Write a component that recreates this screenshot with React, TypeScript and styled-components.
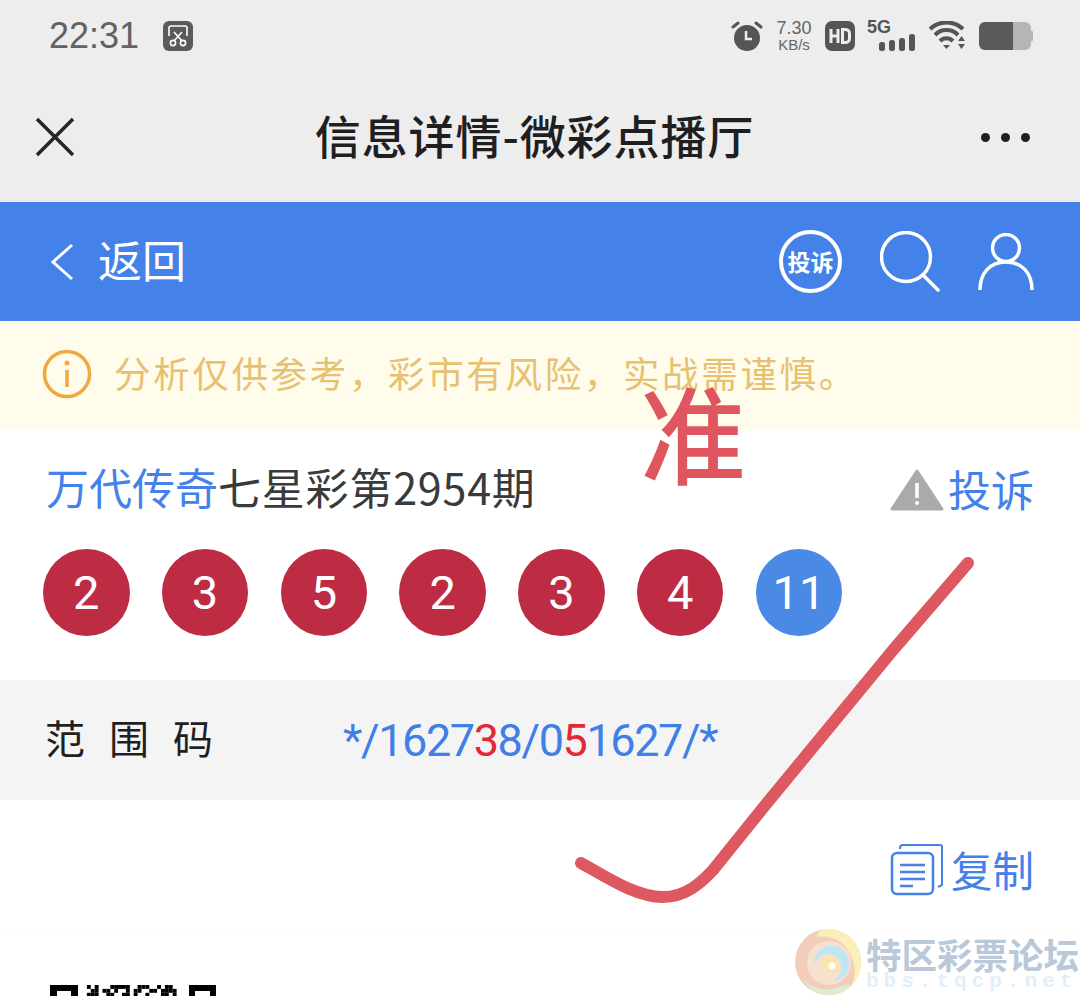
import styled, { createGlobalStyle } from 'styled-components';

const CJK = `"Noto Sans CJK SC", "Liberation Sans", sans-serif`;
const LATIN = `"Liberation Sans", "Noto Sans CJK SC", sans-serif`;
const DIGITS = `Roboto, "Liberation Sans", sans-serif`;

const GlobalStyle = createGlobalStyle`
	html, body {
		margin: 0;
		padding: 0;
		background: #fff;
		overflow: hidden;
	}
`;

const Page = styled.div`
	position: relative;
	width: 1080px;
	height: 996px;
	overflow: hidden;
	font-family: ${CJK};
`;

const StatusBar = styled.div`
	height: 75px;
	background: #ededed;
	display: flex;
	align-items: center;
	justify-content: space-between;
	padding: 0 47px 3px 49px;
	box-sizing: border-box;
`;

const StatusLeft = styled.div`
	display: flex;
	align-items: center;
	gap: 24px;
`;

const Clock = styled.span`
	font-family: ${LATIN};
	font-size: 36px;
	line-height: 1;
	color: #626262;
`;

const StatusRight = styled.div`
	display: flex;
	align-items: center;
	gap: 12px;
`;

const Speed = styled.div`
	display: flex;
	flex-direction: column;
	align-items: center;
	font-family: ${LATIN};
	color: #666;
	width: 38px;

	b {
		font-weight: 400;
		font-size: 18px;
		line-height: 17px;
	}
	span {
		font-size: 15px;
		line-height: 15px;
	}
`;

const Network = styled.div`
	width: 50px;
	height: 32px;
	display: flex;
	flex-direction: column;
	margin-top: -2px;

	span {
		font-family: ${LATIN};
		font-weight: 700;
		font-size: 18px;
		line-height: 16px;
		color: #555;
	}
	svg {
		align-self: flex-end;
		margin-top: -2px;
	}
`;

const NavBar = styled.div`
	height: 127px;
	background: #ededed;
	display: flex;
	align-items: center;
	justify-content: space-between;
	padding: 0 50px 4px 35px;
	box-sizing: border-box;
`;

const NavTitle = styled.div`
	font-size: 46px;
	font-weight: 500;
	color: #1f1f1f;
	letter-spacing: 0.9px;
	line-height: 1;
	margin: -5px 0 0 13px;
`;

const MoreDots = styled.div`
	display: flex;
	gap: 11px;
	margin-top: 2px;

	i {
		width: 9px;
		height: 9px;
		border-radius: 50%;
		background: #1f1f1f;
	}
`;

const BlueBar = styled.div`
	height: 119px;
	background: #4481e8;
	display: flex;
	align-items: center;
	justify-content: space-between;
	padding: 0 46px 0 50px;
	box-sizing: border-box;
`;

const BackLink = styled.div`
	display: flex;
	align-items: center;
	gap: 24px;
	color: #fff;
	font-size: 44px;
	line-height: 1;

	span {
		margin-top: -6px;
	}
`;

const BarIcons = styled.div`
	display: flex;
	align-items: center;
	gap: 38px;
`;

const ComplainBadge = styled.div`
	width: 63px;
	height: 63px;
	border-radius: 50%;
	border: 4px solid #fff;
	box-sizing: border-box;
	display: flex;
	align-items: center;
	justify-content: center;
	color: #fff;
	font-size: 23px;
	font-weight: 700;
	line-height: 1;
	white-space: nowrap;
`;

const Notice = styled.div`
	height: 109px;
	background: #fffcec;
	display: flex;
	align-items: center;
	gap: 22px;
	padding: 0 0 4px 42px;
	box-sizing: border-box;
`;

const NoticeText = styled.span`
	font-size: 36.5px;
	letter-spacing: 2.65px;
	color: #e7c172;
	line-height: 1;
	white-space: nowrap;
`;

const ResultCard = styled.div`
	height: 250px;
	background: #fff;
	padding: 0 46px 0 43px;
	box-sizing: border-box;
`;

const TitleRow = styled.div`
	height: 119px;
	display: flex;
	align-items: center;
	justify-content: space-between;
`;

const IssueTitle = styled.div`
	font-size: 43px;
	color: #3a3a3a;
	line-height: 1;
	padding-left: 3px;
	margin-top: -6px;
	letter-spacing: 0.8px;

	em {
		font-style: normal;
		color: #4481e8;
		letter-spacing: 0;
	}
`;

const ComplainLink = styled.div`
	display: flex;
	align-items: center;
	gap: 4px;
	font-size: 43px;
	line-height: 1;
	color: #4481e8;

	span {
		margin-top: -3px;
	}
`;

const BallRow = styled.div`
	display: flex;
	gap: 32.3px;
`;

const Ball = styled.div<{ $blue?: boolean }>`
	width: 86.5px;
	height: 87px;
	border-radius: 50%;
	background: ${(p) => (p.$blue ? '#4a8ae4' : '#bd2c42')};
	color: #fff;
	display: flex;
	align-items: center;
	justify-content: center;
	font-family: ${DIGITS};
	font-weight: 400;
	font-size: 47px;
	line-height: 1;
`;

const RangeRow = styled.div`
	height: 120px;
	background: #f4f4f5;
	display: flex;
	align-items: center;
	padding-left: 45px;
`;

const RangeLabel = styled.div`
	width: 298px;
	font-size: 40px;
	letter-spacing: 24px;
	color: #1f1f1f;
	line-height: 1;
	white-space: nowrap;
	margin-top: -6px;
`;

const RangeValue = styled.div`
	font-family: ${DIGITS};
	font-weight: 400;
	font-size: 45px;
	letter-spacing: -1.4px;
	color: #3f7fe6;
	line-height: 1;

	em {
		font-style: normal;
		color: #e02a36;
	}
`;

const CopyRow = styled.div`
	height: 135px;
	background: #fff;
	display: flex;
	justify-content: flex-end;
	align-items: flex-start;
	padding: 44px 46px 0 0;
	box-sizing: border-box;
	border-bottom: 4px solid #fdfdfd;
`;

const CopyLink = styled.div`
	display: flex;
	align-items: center;
	gap: 8px;
	font-size: 41.5px;
	line-height: 1;
	color: #4481e8;
`;

const QrStrip = styled.div`
	height: 61px;
	background: #fff;
	padding: 50px 0 0 50px;
	box-sizing: border-box;

	svg {
		display: block;
	}
`;

const Mark = styled.div`
	position: absolute;
	left: 640px;
	top: 367px;
	font-size: 106px;
	line-height: 1.2;
	color: #df5560;
	font-weight: 500;
`;

const CheckStroke = styled.svg`
	position: absolute;
	left: 560px;
	top: 540px;
`;

const Watermark = styled.div`
	position: absolute;
	left: 794px;
	top: 928px;
	display: flex;
	gap: 6px;
`;

const WatermarkLogo = styled.svg`
	opacity: 0.7;
	flex: none;
`;

const WatermarkText = styled.div`
	display: flex;
	flex-direction: column;
	margin-top: 7px;
	margin-left: -2px;

	b {
		font-size: 35.5px;
		line-height: 38px;
		font-weight: 700;
		color: #b9c9da;
		white-space: nowrap;
	}
	span {
		font-family: "Liberation Mono", monospace;
		font-size: 21px;
		line-height: 17px;
		font-weight: 700;
		letter-spacing: 5px;
		color: #e4eef8;
		white-space: nowrap;
	}
`;

// what shows of the code's top rows, between its two corner squares
const qrRows = [
	'0101000111110011100101100',
	'0011011010010110011011110',
	'0111001100110100100011010',
];

function QrTop() {
	return (
		<svg width="166" height="11" viewBox="0 0 166 11">
			<path d="M0 0h28v11h-7V6H7v5H0z" fill="#000" />
			<path d="M139 0h27v11h-6V6h-15v5h-6z" fill="#000" />
			{qrRows.map((row, y) =>
				row.split('').map((c, x) =>
					c === '1' ? (
						<rect key={`${x}-${y}`} x={33 + x * 3.9} y={y * 3.9} width="3.9" height="3.9" fill="#000" />
					) : null,
				),
			)}
		</svg>
	);
}

function App() {
	return (
		<Page>
			<GlobalStyle />
			<StatusBar>
				<StatusLeft>
					<Clock>22:31</Clock>
					<svg width="30" height="30" viewBox="0 0 30 30">
						<rect width="30" height="30" rx="6" fill="#5a5a5a" />
						<path d="M6 15V7a2 2 0 0 1 2-2h14a2 2 0 0 1 2 2v8" fill="none" stroke="#fff" strokeWidth="1.600" />
						<path d="M11 11l8 9M19 11l-8 9" stroke="#fff" strokeWidth="1.600" />
						<circle cx="10" cy="22" r="2.600" fill="none" stroke="#fff" strokeWidth="1.600" />
						<circle cx="20" cy="22" r="2.600" fill="none" stroke="#fff" strokeWidth="1.600" />
					</svg>
				</StatusLeft>
				<StatusRight>
					<svg width="32" height="30" viewBox="0 0 32 30">
						<circle cx="16" cy="17" r="13" fill="#555" />
						<path d="M15 10v8h6" fill="none" stroke="#eee" strokeWidth="2.500" />
						<path d="M2 6l5-4M30 6l-5-4" stroke="#555" strokeWidth="3" strokeLinecap="round" />
					</svg>
					<Speed>
						<b>7.30</b>
						<span>KB/s</span>
					</Speed>
					<svg width="30" height="30" viewBox="0 0 30 30">
						<rect width="30" height="30" rx="7" fill="#555" />
						<path d="M6 8v14M13 8v14M6 15h7" stroke="#eee" strokeWidth="3" />
						<path d="M17.500 8.500h3a4 4 0 0 1 4 4v5a4 4 0 0 1-4 4h-3z" fill="none" stroke="#eee" strokeWidth="3" />
					</svg>
					<Network>
						<span>5G</span>
						<svg width="38" height="18" viewBox="0 0 38 18">
							<rect x="0" y="9" width="6" height="9" rx="2.500" fill="#555" />
							<rect x="10" y="7" width="6" height="11" rx="2.500" fill="#555" />
							<rect x="20" y="5" width="6" height="13" rx="2.500" fill="#555" />
							<rect x="30" y="1" width="6" height="17" rx="2.500" fill="#555" />
						</svg>
					</Network>
					<svg width="38" height="30" viewBox="0 0 38 30">
						<path d="M1 8a24 24 0 0 1 33 0" fill="none" stroke="#555" strokeWidth="4" />
						<path d="M6 14a16 16 0 0 1 23 0" fill="none" stroke="#555" strokeWidth="4" />
						<path d="M11 20a9 9 0 0 1 13 0" fill="none" stroke="#555" strokeWidth="4" />
						<path d="M14 24h7l-3.500 4z" fill="#555" />
						<path d="M29 20h7l-3.500-5zM29 23h7l-3.500 5z" fill="#555" />
					</svg>
					<svg width="54" height="28" viewBox="0 0 54 28">
						<rect width="52" height="28" rx="6" fill="#b5b5b5" />
						<path d="M6 0h28v28H6a6 6 0 0 1-6-6V6a6 6 0 0 1 6-6z" fill="#5a5a5a" />
						<rect x="51" y="9" width="3" height="10" rx="1" fill="#b5b5b5" />
					</svg>
				</StatusRight>
			</StatusBar>

			<NavBar>
				<svg width="40" height="40" viewBox="0 0 40 40">
					<path d="M2 2l36 36M38 2L2 38" stroke="#262626" strokeWidth="3.500" />
				</svg>
				<NavTitle>信息详情-微彩点播厅</NavTitle>
				<MoreDots>
					<i />
					<i />
					<i />
				</MoreDots>
			</NavBar>

			<BlueBar>
				<BackLink>
					<svg width="24" height="38" viewBox="0 0 24 38">
						<path d="M22 2L3 19l19 17" fill="none" stroke="#fff" strokeWidth="3" />
					</svg>
					<span>返回</span>
				</BackLink>
				<BarIcons>
					<ComplainBadge>投诉</ComplainBadge>
					<svg width="60" height="62" viewBox="0 0 60 62">
						<circle cx="26" cy="26" r="24.500" fill="none" stroke="#fff" strokeWidth="3.500" />
						<path d="M43 44l15 15" stroke="#fff" strokeWidth="3.500" strokeLinecap="round" />
					</svg>
					<svg width="56" height="58" viewBox="0 0 56 58">
						<circle cx="28" cy="15" r="13.500" fill="none" stroke="#fff" strokeWidth="3.500" />
						<path d="M2 57c0-17 10-28 26-28s26 11 26 28" fill="none" stroke="#fff" strokeWidth="3.500" />
					</svg>
				</BarIcons>
			</BlueBar>

			<Notice>
				<svg width="50" height="50" viewBox="0 0 50 50">
					<circle cx="25" cy="25" r="22.500" fill="none" stroke="#f0a840" strokeWidth="3.500" />
					<circle cx="25" cy="14" r="2.500" fill="#f0a840" />
					<path d="M25 21v17" stroke="#f0a840" strokeWidth="3.500" />
				</svg>
				<NoticeText>分析仅供参考，彩市有风险，实战需谨慎。</NoticeText>
			</Notice>

			<ResultCard>
				<TitleRow>
					<IssueTitle>
						<em>万代传奇</em>七星彩第2954期
					</IssueTitle>
					<ComplainLink>
						<svg width="54" height="44" viewBox="0 0 54 44">
							<path d="M27 3L52 41H2z" fill="#aaa" stroke="#aaa" strokeWidth="3" strokeLinejoin="round" />
							<path d="M27 15v15" stroke="#fff" strokeWidth="3.500" />
							<circle cx="27" cy="35" r="2" fill="#fff" />
						</svg>
						<span>投诉</span>
					</ComplainLink>
				</TitleRow>
				<BallRow>
					{['2', '3', '5', '2', '3', '4'].map((n, i) => (
						<Ball key={i}>{n}</Ball>
					))}
					<Ball $blue>11</Ball>
				</BallRow>
			</ResultCard>

			<RangeRow>
				<RangeLabel>范围码</RangeLabel>
				<RangeValue>
					*/1627<em>3</em>8/0<em>5</em>1627/*
				</RangeValue>
			</RangeRow>

			<CopyRow>
				<CopyLink>
					<svg width="53" height="52" viewBox="0 0 53 52">
						<path d="M10 5V4a3 3 0 0 1 3-3h37a2 2 0 0 1 2 2v38l-4 2" fill="none" stroke="#4481e8" strokeWidth="2" />
						<rect x="2" y="9" width="41" height="41" rx="5" fill="#fff" stroke="#4481e8" strokeWidth="2.500" />
						<path d="M10 21h25M10 28h25M10 35h25M10 42h13" stroke="#4481e8" strokeWidth="2.500" />
					</svg>
					<span>复制</span>
				</CopyLink>
			</CopyRow>

			<QrStrip>
				<QrTop />
			</QrStrip>

			<Mark>准</Mark>

			<CheckStroke width="430" height="380" viewBox="0 0 430 380">
				<path
					d="M21 323C45 336 75 357 103 357C125 357 140 344 153 330L207 263L333 110L408 23"
					fill="none"
					stroke="#dd5860"
					strokeWidth="12"
					strokeLinecap="round"
					strokeLinejoin="round"
				/>
			</CheckStroke>

			<Watermark>
				<WatermarkLogo width="68" height="68" viewBox="0 0 68 68">
					<circle cx="34" cy="34" r="33" fill="#efb9a0" />
					<path d="M30 1a33 33 0 0 1 37 33c0 10-4 18-10 24 3-6 5-14 3-22C56 18 42 6 22 9c2-4 4-7 8-8z" fill="#f8e79c" />
					<path d="M8 50c8 10 22 14 34 10 6-2 11-5 15-2-8 8-18 10-26 9-10-1-18-8-23-17z" fill="#cfe6b8" />
					<circle cx="35" cy="35" r="22" fill="#f3d3bd" />
					<path d="M20 36c0-12 10-20 21-18 9 2 15 10 14 20-1 8-8 15-16 15 6-4 10-10 8-17-2-8-10-12-17-9-5 2-8 5-10 9z" fill="#a6dcec" />
					<circle cx="36" cy="36" r="8" fill="#f6dc8a" />
					<circle cx="38" cy="38" r="3.500" fill="#fff" />
				</WatermarkLogo>
				<WatermarkText>
					<b>特区彩票论坛</b>
					<span>bbs.tqcp.net</span>
				</WatermarkText>
			</Watermark>
		</Page>
	);
}

export default App;
